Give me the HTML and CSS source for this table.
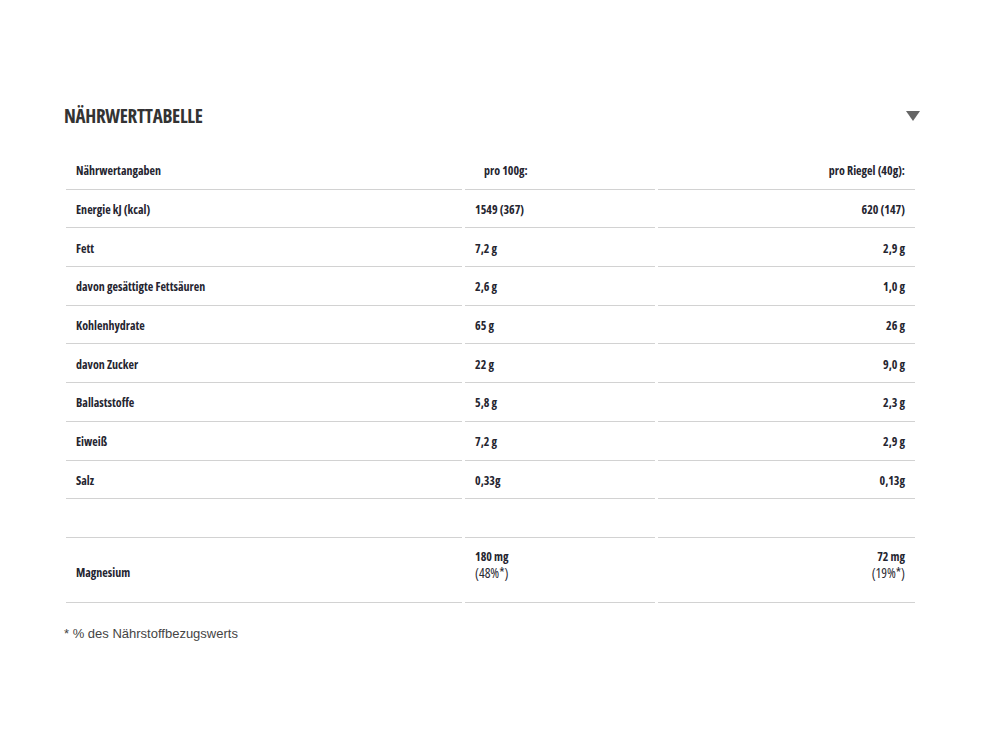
FILE: index.html
```html
<!DOCTYPE html>
<html lang="de">
<head>
<meta charset="utf-8">
<title>Nährwerttabelle</title>
<link rel="stylesheet" href="styles.css">
</head>
<body>
<section class="panel">
  <header class="panel-head">
    <h2 class="panel-title">NÄHRWERTTABELLE</h2>
    <span class="toggle" aria-hidden="true"></span>
  </header>
  <table class="nutri">
    <colgroup>
      <col class="col1">
      <col class="col2">
      <col class="col3">
    </colgroup>
    <thead>
      <tr>
        <th class="c1">Nährwertangaben</th>
        <th class="c2 head2">pro 100g:</th>
        <th class="c3">pro Riegel (40g):</th>
      </tr>
    </thead>
    <tbody>
      <tr><td class="c1">Energie kJ (kcal)</td><td class="c2">1549 (367)</td><td class="c3">620 (147)</td></tr>
      <tr><td class="c1">Fett</td><td class="c2">7,2 g</td><td class="c3">2,9 g</td></tr>
      <tr><td class="c1">davon gesättigte Fettsäuren</td><td class="c2">2,6 g</td><td class="c3">1,0 g</td></tr>
      <tr><td class="c1">Kohlenhydrate</td><td class="c2">65 g</td><td class="c3">26 g</td></tr>
      <tr><td class="c1">davon Zucker</td><td class="c2">22 g</td><td class="c3">9,0 g</td></tr>
      <tr><td class="c1">Ballaststoffe</td><td class="c2">5,8 g</td><td class="c3">2,3 g</td></tr>
      <tr><td class="c1">Eiweiß</td><td class="c2">7,2 g</td><td class="c3">2,9 g</td></tr>
      <tr><td class="c1">Salz</td><td class="c2">0,33g</td><td class="c3">0,13g</td></tr>
      <tr class="empty"><td class="c1"></td><td class="c2"></td><td class="c3"></td></tr>
      <tr class="tall"><td class="c1 label">Magnesium</td><td class="c2 vals">180 mg<br><span class="pct">(48%*)</span></td><td class="c3 vals">72 mg<br><span class="pct">(19%*)</span></td></tr>
    </tbody>
  </table>
  <p class="note">* % des Nährstoffbezugswerts</p>
</section>
</body>
</html>
```

FILE: styles.css
```css
html, body {
  margin: 0;
  padding: 0;
  background: #fff;
}

.panel {
  width: 858px;
  margin: 0 0 0 64px;
  padding-top: 104px;
}

.panel-head {
  display: flex;
  align-items: center;
  justify-content: space-between;
  height: 24px;
}

.panel-title {
  margin: 0;
  font-family: "Open Sans", "DejaVu Sans Condensed", sans-serif;
  font-stretch: 75%;
  font-weight: 700;
  font-size: 19px;
  color: #333;
  letter-spacing: -0.3px;
}

.toggle {
  width: 0;
  height: 0;
  border-left: 7px solid transparent;
  border-right: 7px solid transparent;
  border-top: 10px solid #666;
  margin-right: 2px;
}

.nutri {
  margin-top: 23px;
  margin-left: -1px;
  width: 855px;
  table-layout: fixed;
  border-collapse: separate;
  border-spacing: 3px 0;
  font-family: "Open Sans", "DejaVu Sans Condensed", sans-serif;
  font-stretch: 75%;
  font-weight: 700;
  font-size: 12px;
  color: #252530;
}

.col1 { width: 396px; }
.col2 { width: 190px; }
.col3 { width: 257px; }

.nutri th,
.nutri td {
  height: 35.7px;
  padding: 2px 10px 0;
  border-bottom: 1px solid #d2d2d2;
  text-align: left;
  vertical-align: middle;
  font-weight: 700;
}

.nutri .c3 { text-align: right; }
.nutri .head2 { padding-left: 19px; }

.nutri tr.tall td { height: 64px; line-height: 16px; }
.nutri tr.tall td.label { padding-top: 6px; height: 58px; }
.nutri tr.tall td.vals { padding-top: 0; padding-bottom: 8px; height: 56px; }

.pct {
  font-weight: 400;
  font-size: 13.5px;
  color: #2a2a33;
}

.note {
  margin: 23px 0 0;
  font-family: "Liberation Sans", Arial, sans-serif;
  font-size: 13px;
  color: #444;
}
```
